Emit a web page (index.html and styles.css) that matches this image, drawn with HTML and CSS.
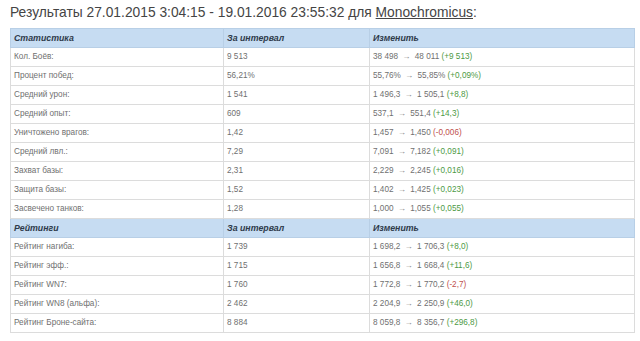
FILE: index.html
```html
<!DOCTYPE html>
<html>
<head>
<meta charset="utf-8">
<link rel="stylesheet" href="styles.css">
</head>
<body>
<h2 class="title">Результаты 27.01.2015 3:04:15 - 19.01.2016 23:55:32 для <a class="user" href="#">Monochromicus</a>:</h2>
<table class="stats">
<colgroup><col class="c1"><col class="c2"><col class="c3"></colgroup>
<tr class="head"><th>Статистика</th><th>За интервал</th><th>Изменить</th></tr>
<tr><td>Кол. Боёв:</td><td>9 513</td><td>38 498 <span class="arr">→</span> 48 011 <span class="up">(+9 513)</span></td></tr>
<tr><td>Процент побед:</td><td>56,21%</td><td>55,76% <span class="arr">→</span> 55,85% <span class="up">(+0,09%)</span></td></tr>
<tr><td>Средний урон:</td><td>1 541</td><td>1 496,3 <span class="arr">→</span> 1 505,1 <span class="up">(+8,8)</span></td></tr>
<tr><td>Средний опыт:</td><td>609</td><td>537,1 <span class="arr">→</span> 551,4 <span class="up">(+14,3)</span></td></tr>
<tr><td>Уничтожено врагов:</td><td>1,42</td><td>1,457 <span class="arr">→</span> 1,450 <span class="down">(-0,006)</span></td></tr>
<tr><td>Средний лвл.:</td><td>7,29</td><td>7,091 <span class="arr">→</span> 7,182 <span class="up">(+0,091)</span></td></tr>
<tr><td>Захват базы:</td><td>2,31</td><td>2,229 <span class="arr">→</span> 2,245 <span class="up">(+0,016)</span></td></tr>
<tr><td>Защита базы:</td><td>1,52</td><td>1,402 <span class="arr">→</span> 1,425 <span class="up">(+0,023)</span></td></tr>
<tr><td>Засвечено танков:</td><td>1,28</td><td>1,000 <span class="arr">→</span> 1,055 <span class="up">(+0,055)</span></td></tr>
<tr class="head"><th>Рейтинги</th><th>За интервал</th><th>Изменить</th></tr>
<tr><td>Рейтинг нагиба:</td><td>1 739</td><td>1 698,2 <span class="arr">→</span> 1 706,3 <span class="up">(+8,0)</span></td></tr>
<tr><td>Рейтинг эфф.:</td><td>1 715</td><td>1 656,8 <span class="arr">→</span> 1 668,4 <span class="up">(+11,6)</span></td></tr>
<tr><td>Рейтинг WN7:</td><td>1 760</td><td>1 772,8 <span class="arr">→</span> 1 770,2 <span class="down">(-2,7)</span></td></tr>
<tr><td>Рейтинг WN8 (альфа):</td><td>2 462</td><td>2 204,9 <span class="arr">→</span> 2 250,9 <span class="up">(+46,0)</span></td></tr>
<tr><td>Рейтинг Броне-сайта:</td><td>8 884</td><td>8 059,8 <span class="arr">→</span> 8 356,7 <span class="up">(+296,8)</span></td></tr>
</table>
</body>
</html>
```
FILE: styles.css
```css
html, body {
  margin: 0;
  padding: 0;
  background: #ffffff;
}
body {
  padding: 0 6px 0 10px;
  font-family: Arial, "Liberation Sans", sans-serif;
}
.title {
  margin: 0;
  height: 28px;
  font-size: 15px;
  font-weight: normal;
  color: #444444;
  line-height: 24px;
  white-space: nowrap;
  transform: scaleX(0.92);
  transform-origin: left center;
}
.user {
  color: #444444;
  text-decoration: underline;
}
.stats {
  border-collapse: collapse;
  width: 624px;
  table-layout: fixed;
  border: 1px solid #c8c8c8;
  font-size: 8.2px;
  color: #707070;
}
.c1 { width: 213px; }
.c2 { width: 146px; }
.c3 { width: 265px; }
.stats td, .stats th {
  border: 1px solid #dcdcdc;
  height: 18px;
  padding: 0 0 0 3px;
  text-align: left;
  vertical-align: middle;
  line-height: 18px;
  white-space: nowrap;
}
.stats tr.head th {
  background: #c6dcf2;
  color: #2e3a4a;
  font-style: italic;
  font-weight: bold;
  font-size: 8.8px;
  border-color: #b8cfe6;
}
.arr {
  color: #808080;
  padding: 0 2px;
}
.up { color: #4d9a45; }
.down { color: #c0504d; }
```
